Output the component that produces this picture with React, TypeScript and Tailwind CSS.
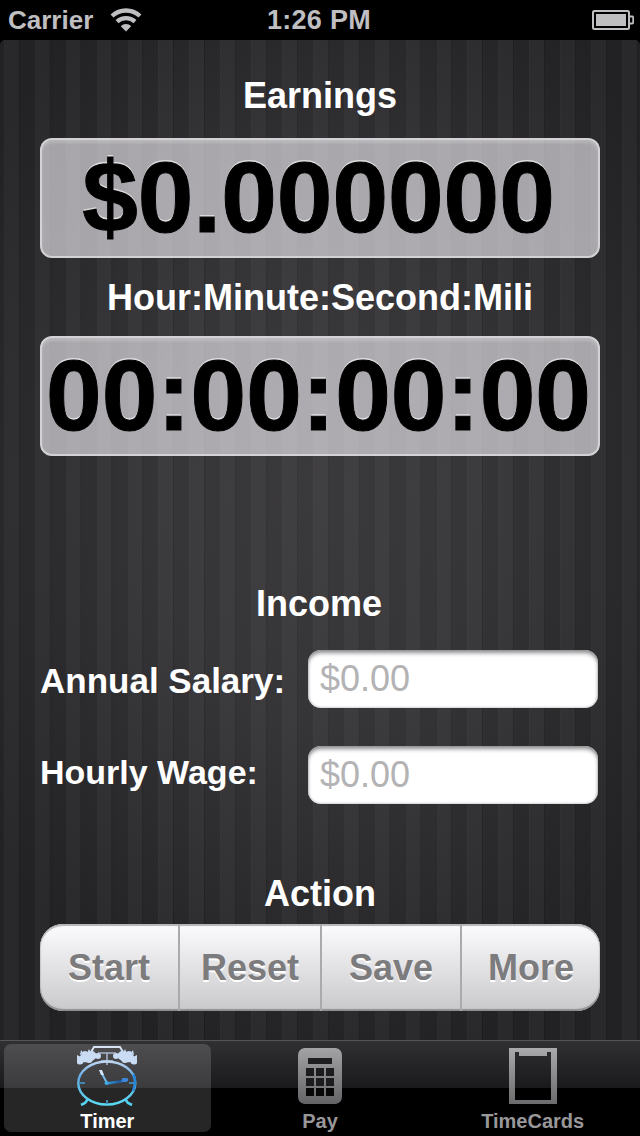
import React, { useState } from 'react';

type Tab = 'Timer' | 'Pay' | 'TimeCards';

const actions = [
  { label: 'Start', width: 'w-[140px]' },
  { label: 'Reset', width: 'w-[142px]' },
  { label: 'Save', width: 'w-[140px]' },
  { label: 'More', width: 'w-[138px]' },
];

const WifiIcon = () => (
  <svg width="32" height="24" viewBox="0 0 32 24" fill="none" stroke="#bfbec0">
    <path d="M2 8C10 0.600 22 0.600 30 8" strokeWidth="4.400" />
    <path d="M7 13.600C12 9 20 9 25 13.600" strokeWidth="4.200" />
    <path d="M16 23.500l-5.200-5.200c2.800-3 7.600-3 10.400 0z" fill="#bfbec0" stroke="none" />
  </svg>
);

const BatteryIcon = () => (
  <svg width="42" height="20" viewBox="0 0 42 20" fill="none">
    <rect x="1" y="1" width="36" height="18" rx="1.5" stroke="#bfbec0" strokeWidth="2" />
    <rect x="4" y="4" width="30" height="12" fill="#bfbec0" />
    <path d="M38 6.5h2.2q1 0 1 1v5q0 1-1 1H38" stroke="#bfbec0" strokeWidth="1.8" />
  </svg>
);

const Bell = () => (
  <g fill="#c9dcf4">
    <ellipse cx="11" cy="11" rx="9" ry="5" transform="rotate(-14 11 11)" />
    <circle cx="3" cy="15" r="3.500" />
    <circle cx="8" cy="8" r="3" />
    <circle cx="15" cy="8" r="3" />
    <circle cx="21" cy="10" r="3" />
    <circle cx="12" cy="13.500" r="3.500" />
    <path d="M4 4l3 4-4 1zM12 3l2 4h-4zM0 9l4 2-4 2z" />
  </g>
);

const ClockIcon = () => (
  <svg width="60" height="60" viewBox="0 0 60 60" fill="none">
    <defs>
      <linearGradient id="rim" x1="0" y1="14" x2="0" y2="60" gradientUnits="userSpaceOnUse">
        <stop offset="0" stopColor="#c8dcf5" />
        <stop offset="0.35" stopColor="#65a9e2" />
        <stop offset="1" stopColor="#5bdcf5" />
      </linearGradient>
      <linearGradient id="hand" x1="29" y1="0" x2="52" y2="0" gradientUnits="userSpaceOnUse">
        <stop offset="0" stopColor="#39a0dc" />
        <stop offset="0.6" stopColor="#1d5aa4" />
        <stop offset="1" stopColor="#4a9ef0" />
      </linearGradient>
    </defs>
    <path d="M14 6l3-5h26l3 5" stroke="#d6e1f2" strokeWidth="2" />
    <path d="M21 7h18M30 7v12M24 15h12" stroke="#a6b5ca" strokeWidth="1.600" />
    <ellipse cx="29.800" cy="37" rx="28.500" ry="21.500" stroke="url(#rim)" strokeWidth="2.400" />
    <Bell />
    <g transform="matrix(-1 0 0 1 60 0)">
      <Bell />
    </g>
    <path d="M56.500 28c2 5 2 11-0.500 17" stroke="#2587d8" strokeWidth="2.400" />
    <path d="M11 53l-3 4-4 2M48 53l3 4 4 2" stroke="#55d2f2" strokeWidth="2.600" />
    <path d="M3 37h5M52 37h5M30 54v4" stroke="#4187b2" strokeWidth="2" />
    <path d="M30 37l-6-11" stroke="#75bce8" strokeWidth="2" />
    <path d="M22 24h3l2 5h-3z" fill="#d4e6f8" />
    <path d="M29 37.500l14-2 8-2" stroke="url(#hand)" strokeWidth="2.400" />
    <path d="M45 32h5v4h-5z" fill="#3b86d8" />
    <circle cx="29.500" cy="37" r="2" fill="#42a8e6" />
  </svg>
);

const CalculatorIcon = () => (
  <svg width="44" height="56" viewBox="0 0 44 56">
    <defs>
      <linearGradient id="calc" x1="0" y1="0" x2="0" y2="1">
        <stop offset="0" stopColor="#a3a2a4" />
        <stop offset="1" stopColor="#646365" />
      </linearGradient>
    </defs>
    <rect width="44" height="56" rx="7" fill="url(#calc)" />
    <rect x="10" y="10" width="24" height="6" fill="#1e1d1f" />
    {[20, 30, 40].map(y => [8, 18, 28].map(x => (
      <rect key={`${x}-${y}`} x={x} y={y} width="8" height="8" fill={y === 40 ? '#070707' : '#1c1b1d'} />
    )))}
  </svg>
);

const TimeCardIcon = () => (
  <svg width="48" height="56" viewBox="0 0 48 56">
    <defs>
      <linearGradient id="card" x1="0" y1="0" x2="0" y2="1">
        <stop offset="0" stopColor="#aaa9ab" />
        <stop offset="1" stopColor="#6b6a6c" />
      </linearGradient>
    </defs>
    <path fillRule="evenodd" d="M0 0h48v56H0zM6 4v48h36V4h-4v4H10V4z" fill="url(#card)" />
  </svg>
);

const Heading = ({ children }: { children: React.ReactNode }) => (
  <h2 className="h-10 text-center text-[36px] leading-[40px] font-bold text-white">{children}</h2>
);

const Display = ({ children }: { children: React.ReactNode }) => (
  <div className="flex h-[120px] justify-center rounded-[12px] border-2 border-[#d2d1d3] bg-[#fbf8ff]/60 pr-[3px] shadow-[inset_0_3px_3px_rgba(255,255,255,0.2)]">
    <span className="-mt-[3px] text-[100px] leading-[120px] font-bold whitespace-nowrap text-black [-webkit-text-stroke:1px_#000] [text-shadow:0_-2px_0_rgba(255,255,255,0.6)]">
      {children}
    </span>
  </div>
);

interface MoneyFieldProps {
  label: string;
  value: string;
  onChange: (value: string) => void;
  labelClass: string;
}

const MoneyField = ({ label, value, onChange, labelClass }: MoneyFieldProps) => (
  <label className="flex h-[58px] items-start justify-between pr-0.5">
    <span className={`leading-[40px] font-bold whitespace-nowrap text-white ${labelClass}`}>{label}</span>
    <input
      value={value}
      onChange={e => onChange(e.target.value)}
      placeholder="$0.00"
      className="h-[58px] w-[290px] rounded-[13px] bg-white px-3 pb-px text-[36px] leading-[40px] text-black shadow-[inset_0_4px_4px_-1px_#8e8d8f,inset_0_0_3px_#a5a4a6] outline-none placeholder:text-[#b3b2b4]"
    />
  </label>
);

const tabs: { name: Tab; icon: React.ReactNode }[] = [
  { name: 'Timer', icon: <ClockIcon /> },
  { name: 'Pay', icon: <CalculatorIcon /> },
  { name: 'TimeCards', icon: <TimeCardIcon /> },
];

export default function App() {
  const [tab, setTab] = useState<Tab>('Timer');
  const [salary, setSalary] = useState('');
  const [wage, setWage] = useState('');

  return (
    <div className="flex h-[1136px] w-[640px] flex-col overflow-hidden bg-black font-['Liberation_Sans',Arial,sans-serif]">
      <header className="grid h-10 grid-cols-3 items-center pr-1.5 pl-2 text-[26px] leading-[40px] font-bold text-[#bfbec0]">
        <div className="flex items-center gap-[17px]">
          <span>Carrier</span>
          <WifiIcon />
        </div>
        <span className="pr-1 text-center text-[27px] tracking-[0.3px]">1:26 PM</span>
        <div className="flex justify-end">
          <BatteryIcon />
        </div>
      </header>

      <main className="h-[1000px] rounded-t-[5px] bg-[radial-gradient(ellipse_400px_600px_at_50%_45%,rgba(250,245,255,0.115),rgba(250,245,255,0.09)_40%,rgba(250,245,255,0.02)_85%,transparent),repeating-linear-gradient(90deg,#222123_0px,#222123_4px,#2d2c2e_4px,#29282a_5px,#29282a_18.500px,#1b1a1c_19px,#222123_20px,#222123_30.900px)] px-10 pt-9">
        <Heading>Earnings</Heading>
        <div className="mt-[22px]">
          <Display>$0.000000</Display>
        </div>
        <div className="mt-5 mb-[18px]">
          <Heading>Hour:Minute:Second:Mili</Heading>
        </div>
        <Display>00:00:00:00</Display>

        <div className="mt-32 mb-[26px] pr-0.5">
          <Heading>Income</Heading>
        </div>
        <div className="flex flex-col gap-[38px]">
          <MoneyField label="Annual Salary:" value={salary} onChange={setSalary} labelClass="pt-[11px] text-[35px]" />
          <MoneyField label="Hourly Wage:" value={wage} onChange={setWage} labelClass="pt-[6px] text-[34px]" />
        </div>

        <div className="mt-[70px] mb-2.5">
          <Heading>Action</Heading>
        </div>
        <div className="flex h-[87px] overflow-hidden rounded-[23px] bg-gradient-to-b from-[#fcfbfd] to-[#c9c8ca] shadow-[inset_0_2px_1px_#b5b4b6,inset_0_-2px_1px_#8f8e90,inset_0_0_2px_#a5a4a6]">
          {actions.map(a => (
            <button
              key={a.label}
              className={`${a.width} border-r-2 border-[#aaa9ab] text-[36px] leading-[40px] font-bold text-[#7c7b7d] [text-shadow:0_2px_0_#fff] last:border-r-0`}
            >
              {a.label}
            </button>
          ))}
        </div>
      </main>

      <nav className="flex h-24 gap-1.5 border-t border-[#555456] bg-[linear-gradient(#302f31_0,#1a191b_47px,#000_47px)] px-1 pt-[3px] pb-1">
        {tabs.map(t => (
          <button
            key={t.name}
            onClick={() => setTab(t.name)}
            className={`flex h-[88px] flex-1 flex-col items-center rounded-[7px] ${tab === t.name ? 'bg-white/15 text-white' : 'text-[#98979a]'}`}
          >
            <span className="flex h-[66px] items-center justify-center pt-0.5 pb-1">{t.icon}</span>
            <span className="text-[20px] leading-[22px] font-bold">{t.name}</span>
          </button>
        ))}
      </nav>
    </div>
  );
}
